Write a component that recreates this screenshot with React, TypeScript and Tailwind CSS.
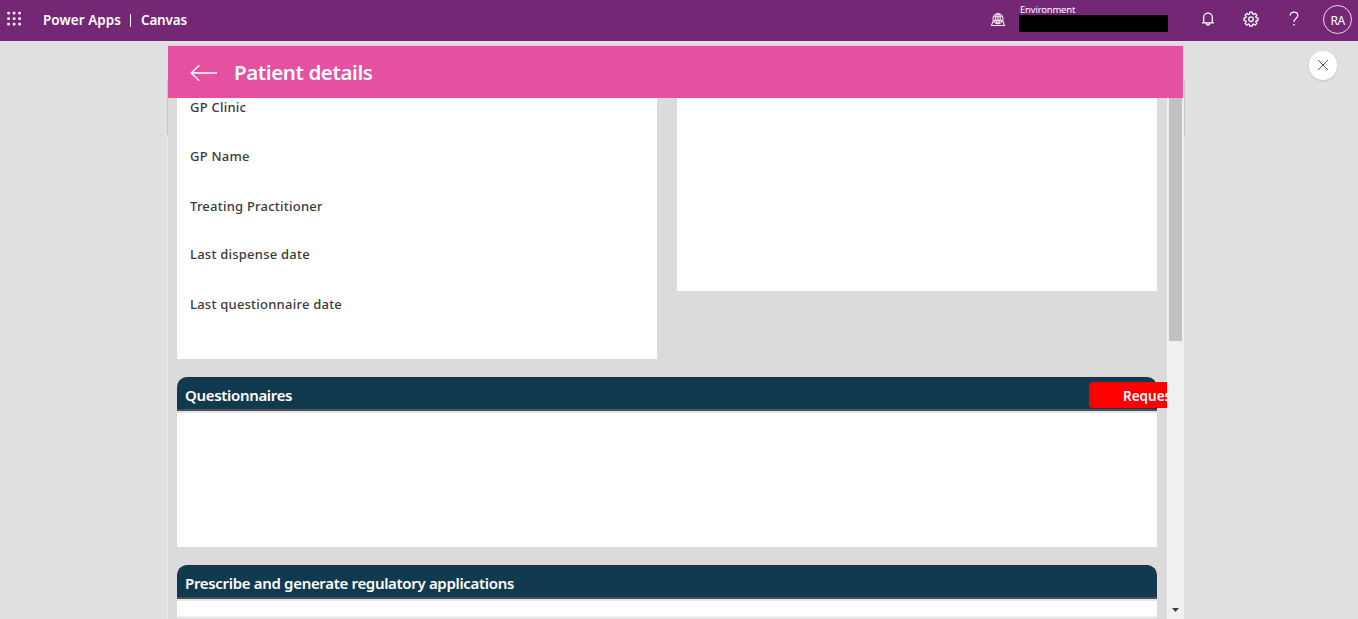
import React from "react";

const dots = [8.5, 14, 19.5];

const fields = [
  { label: "GP Clinic", height: "h-[49px]" },
  { label: "GP Name", height: "h-[50px]" },
  { label: "Treating Practitioner", height: "h-12" },
  { label: "Last dispense date", height: "h-[50px]" },
  { label: "Last questionnaire date", height: "h-[50px]" },
];

function Waffle() {
  return (
    <svg className="h-[41px] w-7 shrink-0" viewBox="0 0 28 41" fill="#f6ecf6">
      {dots.map((x) =>
        dots.map((y) => <rect key={`${x}-${y}`} x={x - 1.3} y={y + 3.2} width="2.8" height="2.8" rx="0.9" />),
      )}
    </svg>
  );
}

function GlobeIcon() {
  return (
    <svg className="h-4 w-4" viewBox="0 0 16 16" fill="none" stroke="#f3e6f3" strokeWidth="1.1">
      <circle cx="8" cy="6.6" r="5" />
      <ellipse cx="8" cy="6.6" rx="2.2" ry="5" />
      <path d="M3.4 4.8h9.2M3.4 8.4h9.2M8 1.6v10" />
      <path d="M3.2 8.7 1.5 13.5h13l-1.7-4.8" />
    </svg>
  );
}

function BellIcon() {
  return (
    <svg className="h-4 w-4" viewBox="0 0 16 16" fill="none" stroke="#fff" strokeWidth="1.3">
      <path d="M3.7 11.6V6.4a4.3 4.3 0 0 1 8.6 0v5.2M2 11.9h12M6.2 12.3a1.8 1.8 0 0 0 3.6 0" />
    </svg>
  );
}

function GearIcon() {
  return (
    <svg className="h-4 w-4" viewBox="0 0 16 16" fill="none" stroke="#fff" strokeWidth="1.3" strokeLinejoin="round">
      <path d="M6.8 1.2h2.4l.4 1.9 1 .4 1.6-1.1 1.7 1.7-1.1 1.6.4 1 1.8.4v2.3l-1.8.4-.4 1 1.1 1.6-1.7 1.7-1.6-1.1-1 .4-.4 1.8H6.8l-.4-1.8-1-.4-1.6 1.1-1.7-1.7 1.1-1.6-.4-1L1 9.4V7.1l1.8-.4.4-1-1.1-1.6 1.7-1.7 1.6 1.1 1-.4z" />
      <circle cx="8" cy="8.2" r="2.3" />
    </svg>
  );
}

function HelpIcon() {
  return (
    <svg className="h-4 w-4" viewBox="0 0 16 16" fill="none" stroke="#fff" strokeWidth="1.25">
      <path d="M4.2 4.5C4.2 2.4 5.8 1.2 8 1.2s3.8 1.3 3.8 3.3c0 2.9-3.9 3.2-3.9 6.6" />
      <path d="M7.9 13v1.6" strokeWidth="1.4" />
    </svg>
  );
}

function TopBar() {
  return (
    <header className="flex h-[41px] shrink-0 items-start bg-[#742774] text-white">
      <Waffle />
      <div className="ml-[15px] flex h-[41px] items-center whitespace-pre text-[13.5px] font-semibold">
        <span className="w-[87px] tracking-[0.05px]">Power Apps</span>
        <span className="h-[13px] w-px bg-white" />
        <span className="ml-[10px] tracking-[-0.2px]">Canvas</span>
      </div>
      <div className="ml-auto flex">
        <div className="mt-3 mr-[13px]">
          <GlobeIcon />
        </div>
        <div className="w-[149px]">
          <div className="mt-[3px] h-3 pl-px text-[9.5px] leading-[13px] tracking-[-0.2px]">Environment</div>
          <div className="h-[17px] w-[149px] bg-black" />
        </div>
        <div className="mt-[11px] ml-8 flex gap-[27px]">
          <BellIcon />
          <GearIcon />
          <HelpIcon />
        </div>
        <div className="mt-[5px] mr-[6px] ml-[21px] flex h-[29px] w-[29px] items-center justify-center rounded-full border border-[#ead9ea] pt-[2px] text-[12px] tracking-[-0.6px]">
          RA
        </div>
      </div>
    </header>
  );
}

function SectionBar({ title, children }: { title: string; children?: React.ReactNode }) {
  return (
    <div className="flex h-[34px] w-[980px] shrink-0 items-center rounded-t-[10px] border-t border-b-2 border-t-[#173342] border-b-[#4b4f59] bg-[#123a4f] pl-[8px] text-[15px] font-semibold text-white">
      <span className="pt-[3px] tracking-[-0.32px] whitespace-nowrap">{title}</span>
      {children}
    </div>
  );
}

export default function App() {
  return (
    <div className="flex h-[619px] w-[1358px] flex-col overflow-hidden bg-[#e0e0e0] font-['Noto_Sans','Open_Sans',sans-serif]">
      <TopBar />
      <div className="flex min-h-0 flex-1">
        <div className="flex w-[168px] shrink-0 flex-col items-end pt-10">
          <div className="h-[54px] w-px bg-[#c5cabb]" />
          <div className="w-px flex-1 bg-[#e9e9e9]" />
        </div>

        <main className="flex w-[1016px] shrink-0 flex-col">
          <div className="h-[5px] shrink-0 border-b border-[#ddd0d9] bg-[#e8dde7]" />
          <div className="flex h-[52px] w-[1015px] shrink-0 items-center bg-[#e650a0] pt-px pl-[22px] text-white">
            <svg className="h-[18px] w-[28px]" viewBox="0 0 28 18" fill="none" stroke="#fff" strokeWidth="1.5">
              <path d="M1.2 9H27M9.3 1.3 1.2 9l8.1 7.7" />
            </svg>
            <h1 className="ml-[16px] pb-[2px] text-[20.5px] leading-7 font-semibold tracking-[-0.38px]">
              Patient details
            </h1>
          </div>

          <div className="flex min-h-0 flex-1">
            <div className="flex w-[999px] flex-col overflow-hidden bg-[#dbdbdb] pl-[9px]">
              <div className="flex shrink-0 items-start gap-5">
                <section className="h-[261px] w-[480px] bg-white pl-[13px]">
                  {fields.map((field) => (
                    <div
                      key={field.label}
                      className={`${field.height} text-[13px] leading-[18px] font-medium tracking-[0.23px] text-[#3b3a39]`}
                    >
                      {field.label}
                    </div>
                  ))}
                </section>
                <section className="h-[193px] w-[480px] bg-white" />
              </div>

              <div className="mt-[18px] shrink-0">
                <SectionBar title="Questionnaires">
                  <button className="mt-[2px] -mr-[70px] ml-auto h-[26px] w-[138px] shrink-0 rounded-[4px] bg-[#ff0000] pt-[3px] pl-[34px] text-left text-[13.5px] font-semibold">
                    Request
                  </button>
                </SectionBar>
                <div className="h-[136px] w-[980px] border-t-2 border-[#e6e2e5] bg-white" />
              </div>

              <div className="mt-[18px] shrink-0">
                <SectionBar title="Prescribe and generate regulatory applications" />
                <div className="h-[19px] w-[980px] border-y-2 border-t-[#e6e6e6] border-b-[#efefef] bg-white" />
              </div>
            </div>

            <div className="flex w-[17px] flex-col justify-between bg-[#f0f0f0] pl-[2px]">
              <div className="h-[243px] w-[13px] bg-[#c1c1c1]" />
              <svg className="mb-[7px] ml-[3px] h-[4px] w-[7px]" viewBox="0 0 7 4" fill="#404040">
                <path d="M0 0h7L3.5 4z" />
              </svg>
            </div>
          </div>
        </main>

        <div className="flex flex-1 items-start">
          <div className="mt-10 h-[54px] w-px bg-[#c5cabb]" />
          <button className="mt-[10px] ml-[124px] flex h-[29px] w-[28px] items-center justify-center rounded-full bg-white pb-px shadow-sm">
            <svg className="h-3 w-3" viewBox="0 0 12 12" fill="none" stroke="#67446a" strokeWidth="1">
              <path d="m1 1 10 10M11 1 1 11" />
            </svg>
          </button>
        </div>
      </div>
    </div>
  );
}
